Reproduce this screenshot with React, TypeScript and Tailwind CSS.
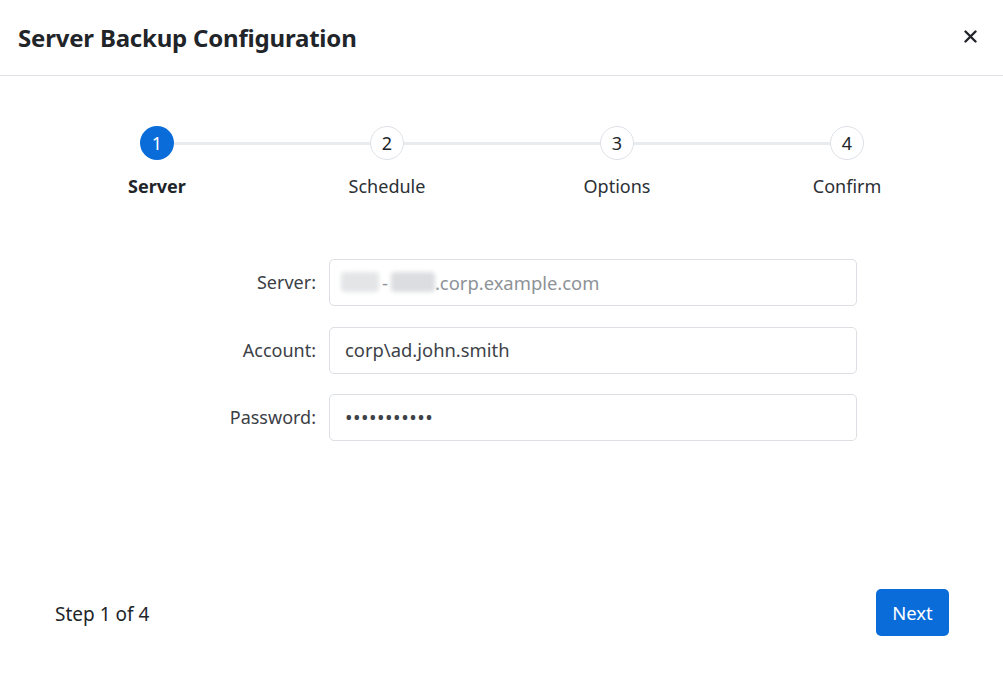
import React from "react";

const steps = ["Server", "Schedule", "Options", "Confirm"];

function Row({ label, children }: { label: string; children: React.ReactNode }) {
  return (
    <div className="flex items-center">
      <div className="w-[116px] text-right text-[18px] text-[#3b4046] pr-[13px] box-content">{label}</div>
      <div className="w-[528px] h-[47px] border border-[#dcdfe3] rounded-[5px] flex items-center px-[15px] text-[18.4px]">
        {children}
      </div>
    </div>
  );
}

export default function App() {
  return (
    <div className="w-[1003px] h-[691px] bg-white flex flex-col text-[#212529] font-['Noto_Sans',sans-serif]">
      <div className="h-[76px] border-b border-[#dee2e6] flex items-center justify-between pl-[18px] pr-[26px] shrink-0">
        <div className="text-[24px] font-bold tracking-[-0.2px] text-[#212529]">Server Backup Configuration</div>
        <svg width="13" height="13" viewBox="0 0 13 13" className="mt-[-2px]">
          <path d="M1.5 1.5 L11.5 11.5 M11.5 1.5 L1.5 11.5" stroke="#212529" strokeWidth="2.4" strokeLinecap="round" />
        </svg>
      </div>

      <div className="flex-1 flex flex-col">
        <div className="w-[920px] ml-[42px] mt-[50px]">
          <div className="flex items-center px-[98px]">
            {steps.map((s, i) => (
              <React.Fragment key={s}>
                <div
                  className={
                    i === 0
                      ? "w-[34px] h-[34px] rounded-full bg-[#0a6cd9] text-white flex items-center justify-center text-[18px] shrink-0"
                      : "w-[34px] h-[34px] rounded-full bg-white border border-[#dee2e6] text-[#212529] flex items-center justify-center text-[18px] shrink-0"
                  }
                >
                  {i + 1}
                </div>
                {i < steps.length - 1 && <div className="flex-1 h-[3px] bg-[#e9ecef]" />}
              </React.Fragment>
            ))}
          </div>
          <div className="grid grid-cols-4 mt-[14px]">
            {steps.map((s, i) => (
              <div key={s} className={"text-center text-[18px] leading-[24px] " + (i === 0 ? "font-bold text-[#212529]" : "text-[#2b3035]")}>
                {s}
              </div>
            ))}
          </div>
        </div>

        <div className="ml-[200px] mt-[61px] flex flex-col gap-[20.5px]">
          <Row label="Server:">
            <div className="flex items-center text-[#8d9297] ml-[-4px]">
              <span className="inline-block w-[38px] h-[20px] bg-[#e4e5e7] blur-[2px] rounded-sm" />
              <span className="mx-[3px]">-</span>
              <span className="inline-block w-[44px] h-[20px] bg-[#dcdde0] blur-[2px] rounded-sm" />
              <span>.corp.example.com</span>
            </div>
          </Row>
          <Row label="Account:">
            <span className="text-[#3d4247]">corp\ad.john.smith</span>
          </Row>
          <Row label="Password:">
            <span className="text-[#3d4247] tracking-[0.5px] text-[20px] leading-none">•••••••••••</span>
          </Row>
        </div>
      </div>

      <div className="flex items-center justify-between pl-[55px] pr-[54px] pb-[55px] shrink-0">
        <div className="text-[19px] text-[#212529] mt-[3px]">Step 1 of 4</div>
        <button className="w-[73px] h-[47px] rounded-[5px] bg-[#0a6cd9] text-white text-[18.5px]">Next</button>
      </div>
    </div>
  );
}
